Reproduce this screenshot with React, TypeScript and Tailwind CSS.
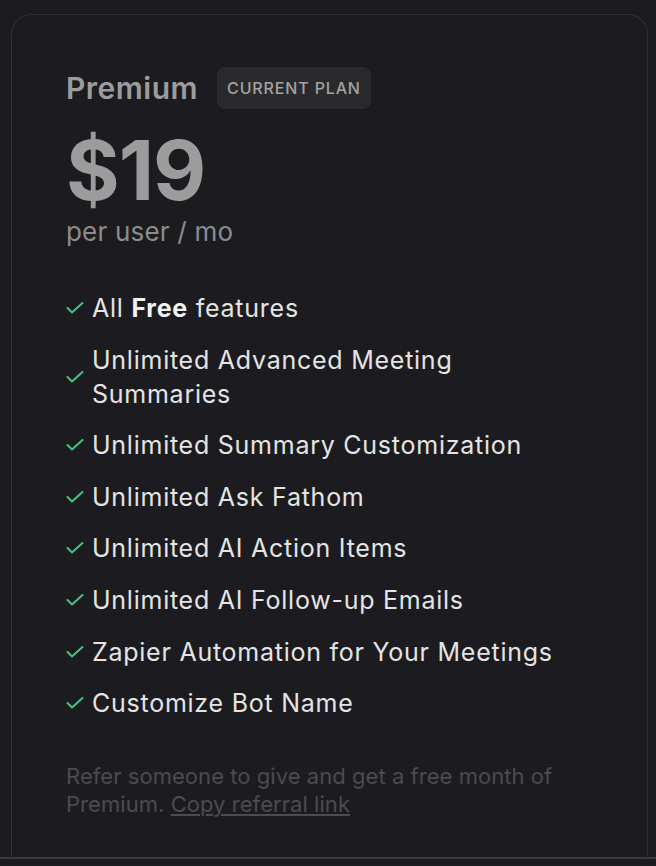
import React from "react";

const features: React.ReactNode[] = [
  <>All <span className="font-bold text-[#f2f2f2]">Free</span> features</>,
  "Unlimited Advanced Meeting Summaries",
  "Unlimited Summary Customization",
  "Unlimited Ask Fathom",
  "Unlimited AI Action Items",
  "Unlimited AI Follow-up Emails",
  "Zapier Automation for Your Meetings",
  "Customize Bot Name",
];

function Check() {
  return (
    <svg width="18" height="12" viewBox="0 0 18 12" fill="none" className="shrink-0">
      <path d="M1.5 6l4.5 4.5L16.5 1" stroke="#46c283" strokeWidth="2" strokeLinecap="round" strokeLinejoin="round" />
    </svg>
  );
}

export default function App() {
  return (
    <div className="min-h-[866px] bg-[#1c1c20] font-['Inter',sans-serif] antialiased">
      <div className="pt-[14px] pl-[11px] pr-[8px]">
        <div className="h-[843px] rounded-t-[20px] border border-b-0 border-[#303035] pl-[54px] pr-[54px] pt-[52px]">
          <div className="flex h-[42px] items-center gap-[19px]">
            <span className="text-[30px] font-semibold tracking-[0.5px] text-[#9c9c9c]">Premium</span>
            <span className="flex h-[42px] items-center rounded-[8px] bg-[#2a2a2c] px-[10px] text-[16px] font-medium tracking-[0.85px] text-[#a3a3a3]">
              CURRENT PLAN
            </span>
          </div>
          <div className="mt-[21px] text-[82px] font-bold leading-none tracking-[-1px] text-[#9c9c9c]">$19</div>
          <div className="mt-[4px] text-[26px] leading-[32px] tracking-[0.2px] text-[#8c8c8c]">per user / mo</div>
          <ul className="mt-[43px] flex flex-col gap-[17.6px]">
            {features.map((f, i) => (
              <li key={i} className="flex items-center gap-[8px] text-[25px] leading-[34px] tracking-[0.75px] text-[#e4e4e4]">
                <Check />
                <span>{f}</span>
              </li>
            ))}
          </ul>
          <p className="mt-[42px] text-[22px] leading-[28px] tracking-[0.05px] text-[#4b4b50]">
            Refer someone to give and get a free month of Premium.{" "}
            <span className="underline decoration-[#4b4b50] underline-offset-[2px]">Copy referral link</span>
          </p>
        </div>
      </div>
      <div className="h-[2px] bg-[#3a3a3f]" />
    </div>
  );
}
